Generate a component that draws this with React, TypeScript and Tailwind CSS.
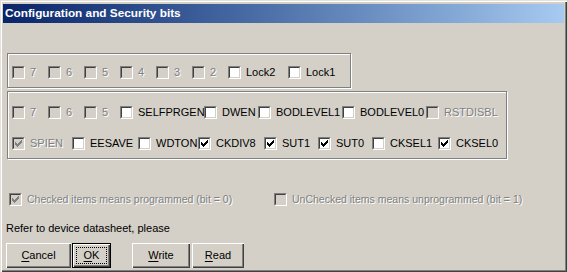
import React from 'react';

type Bit = { label: string; w: number; checked?: boolean; disabled?: boolean; small?: boolean };

// fuse bit rows, widths are the spacing between boxes
const lockBits: Bit[] = [
  { label: '7', w: 36, disabled: true },
  { label: '6', w: 36, disabled: true },
  { label: '5', w: 36, disabled: true },
  { label: '4', w: 36, disabled: true },
  { label: '3', w: 36, disabled: true },
  { label: '2', w: 36, disabled: true },
  { label: 'Lock2', w: 60 },
  { label: 'Lock1', w: 56 },
];

const highBits: Bit[] = [
  { label: '7', w: 36, disabled: true },
  { label: '6', w: 36, disabled: true },
  { label: '5', w: 36, disabled: true },
  { label: 'SELFPRGEN', w: 84 },
  { label: 'DWEN', w: 54 },
  { label: 'BODLEVEL1', w: 84 },
  { label: 'BODLEVEL0', w: 84 },
  { label: 'RSTDISBL', w: 76, disabled: true },
];

const lowBits: Bit[] = [
  { label: 'SPIEN', w: 60, checked: true, disabled: true },
  { label: 'EESAVE', w: 66 },
  { label: 'WDTON', w: 60 },
  { label: 'CKDIV8', w: 66, checked: true },
  { label: 'SUT1', w: 54, checked: true },
  { label: 'SUT0', w: 54, checked: true },
  { label: 'CKSEL1', w: 66 },
  { label: 'CKSEL0', w: 62, checked: true },
];

const Tick = ({ color }: { color: string }) => (
  <svg width="7" height="7" viewBox="0 0 7 7" shapeRendering="crispEdges" fill={color}>
    <rect x="6" y="0" width="1" height="1" />
    <rect x="5" y="1" width="2" height="1" />
    <rect x="0" y="2" width="1" height="1" />
    <rect x="4" y="2" width="3" height="1" />
    <rect x="0" y="3" width="2" height="1" />
    <rect x="3" y="3" width="3" height="1" />
    <rect x="0" y="4" width="5" height="1" />
    <rect x="1" y="5" width="3" height="1" />
    <rect x="2" y="6" width="1" height="1" />
  </svg>
);

const Box = ({ checked, disabled }: { checked?: boolean; disabled?: boolean }) => (
  <div className="w-[13px] h-[13px] shrink-0 border border-t-[#808080] border-l-[#808080] border-r-white border-b-white">
    <div
      className={`w-full h-full flex items-center justify-center border border-t-[#404040] border-l-[#404040] border-r-[#d4d0c8] border-b-[#d4d0c8] ${
        disabled ? 'bg-[#d4d0c8]' : 'bg-white'
      }`}
    >
      {checked && <Tick color={disabled ? '#808080' : '#000000'} />}
    </div>
  </div>
);

const CheckItem = ({ bit }: { bit: Bit }) => (
  <div className="flex items-center shrink-0 overflow-hidden whitespace-nowrap h-[13px]" style={{ width: bit.w }}>
    <Box checked={bit.checked} disabled={bit.disabled} />
    <span
      className={`ml-[5px] leading-[13px] ${bit.small ? 'text-[10.5px]' : ''} ${
        bit.disabled ? 'text-[#808080] [text-shadow:1px_1px_0_#ffffff]' : 'text-black'
      }`}
    >
      {bit.label}
    </span>
  </div>
);

const Row = ({ bits }: { bits: Bit[] }) => (
  <div className="flex">
    {bits.map((b, i) => (
      <CheckItem key={i} bit={b} />
    ))}
  </div>
);

const Button = ({ label, u, w, isDefault }: { label: string; u: number; w: number; isDefault?: boolean }) => {
  const text = (
    <span>
      {label.slice(0, u)}
      <span className="underline underline-offset-[2px]">{label[u]}</span>
      {label.slice(u + 1)}
    </span>
  );
  return (
    <div
      className={`h-[25px] shrink-0 flex bg-[#d4d0c8] text-black shadow-[inset_1px_1px_0_#ffffff,inset_-1px_-1px_0_#404040,inset_-2px_-2px_0_#808080] ${
        isDefault ? 'border border-black' : ''
      }`}
      style={{ width: w }}
    >
      {isDefault ? (
        <div className="flex-1 m-[3px] border border-dotted border-black flex items-center justify-center">{text}</div>
      ) : (
        <div className="flex-1 flex items-center justify-center">{text}</div>
      )}
    </div>
  );
};

const App: React.FC = () => {
  return (
    <div className="w-[568px] h-[272px] bg-[#d4d0c8] font-['Liberation_Sans',Arial,sans-serif] text-[11px] overflow-hidden">
      <div className="w-[567px] h-[272px] flex flex-col shadow-[inset_1px_1px_0_#e4e1dc,inset_2px_2px_0_#ffffff,inset_-1px_-1px_0_#404040,inset_-2px_-2px_0_#808080]">
        {/* title bar */}
        <div className="mt-[4px] mx-[3px] h-[19px] flex items-center pl-[2px] bg-linear-to-r from-[#0a246a] to-[#a6caf0]">
          <span className="text-white font-bold text-[11.8px] whitespace-nowrap">Configuration and Security bits</span>
        </div>

        <div className="pl-[7px]">
          {/* lock bits */}
          <div className="mt-[30px] w-[344px] h-[35px] pl-[4px] pt-[12px] border border-[#808080] shadow-[1px_1px_0_#ffffff,inset_1px_1px_0_#ffffff]">
            <Row bits={lockBits} />
          </div>

          {/* fuse bits */}
          <div className="mt-[3px] w-[500px] h-[68px] pl-[4px] pt-[14px] flex flex-col gap-[18px] border border-[#808080] shadow-[1px_1px_0_#ffffff,inset_1px_1px_0_#ffffff]">
            <Row bits={highBits} />
            <Row bits={lowBits} />
          </div>
        </div>

        {/* legend */}
        <div className="mt-[34px] pl-[9px] flex">
          <CheckItem bit={{ label: 'Checked items means programmed (bit = 0)', w: 265, checked: true, disabled: true, small: true }} />
          <CheckItem bit={{ label: 'UnChecked items means unprogrammed (bit = 1)', w: 260, disabled: true, small: true }} />
        </div>

        <div className="mt-[16px] pl-[6px] h-[13px] leading-[13px] text-black">Refer to device datasheet, please</div>

        {/* buttons */}
        <div className="mt-[8px] pl-[6px] flex">
          <Button label="Cancel" u={0} w={65} />
          <div className="ml-[1px]">
            <Button label="OK" u={0} w={39} isDefault />
          </div>
          <div className="ml-[21px]">
            <Button label="Write" u={0} w={58} />
          </div>
          <div className="ml-[2px]">
            <Button label="Read" u={0} w={52} />
          </div>
        </div>
      </div>
    </div>
  );
};

export default App;
